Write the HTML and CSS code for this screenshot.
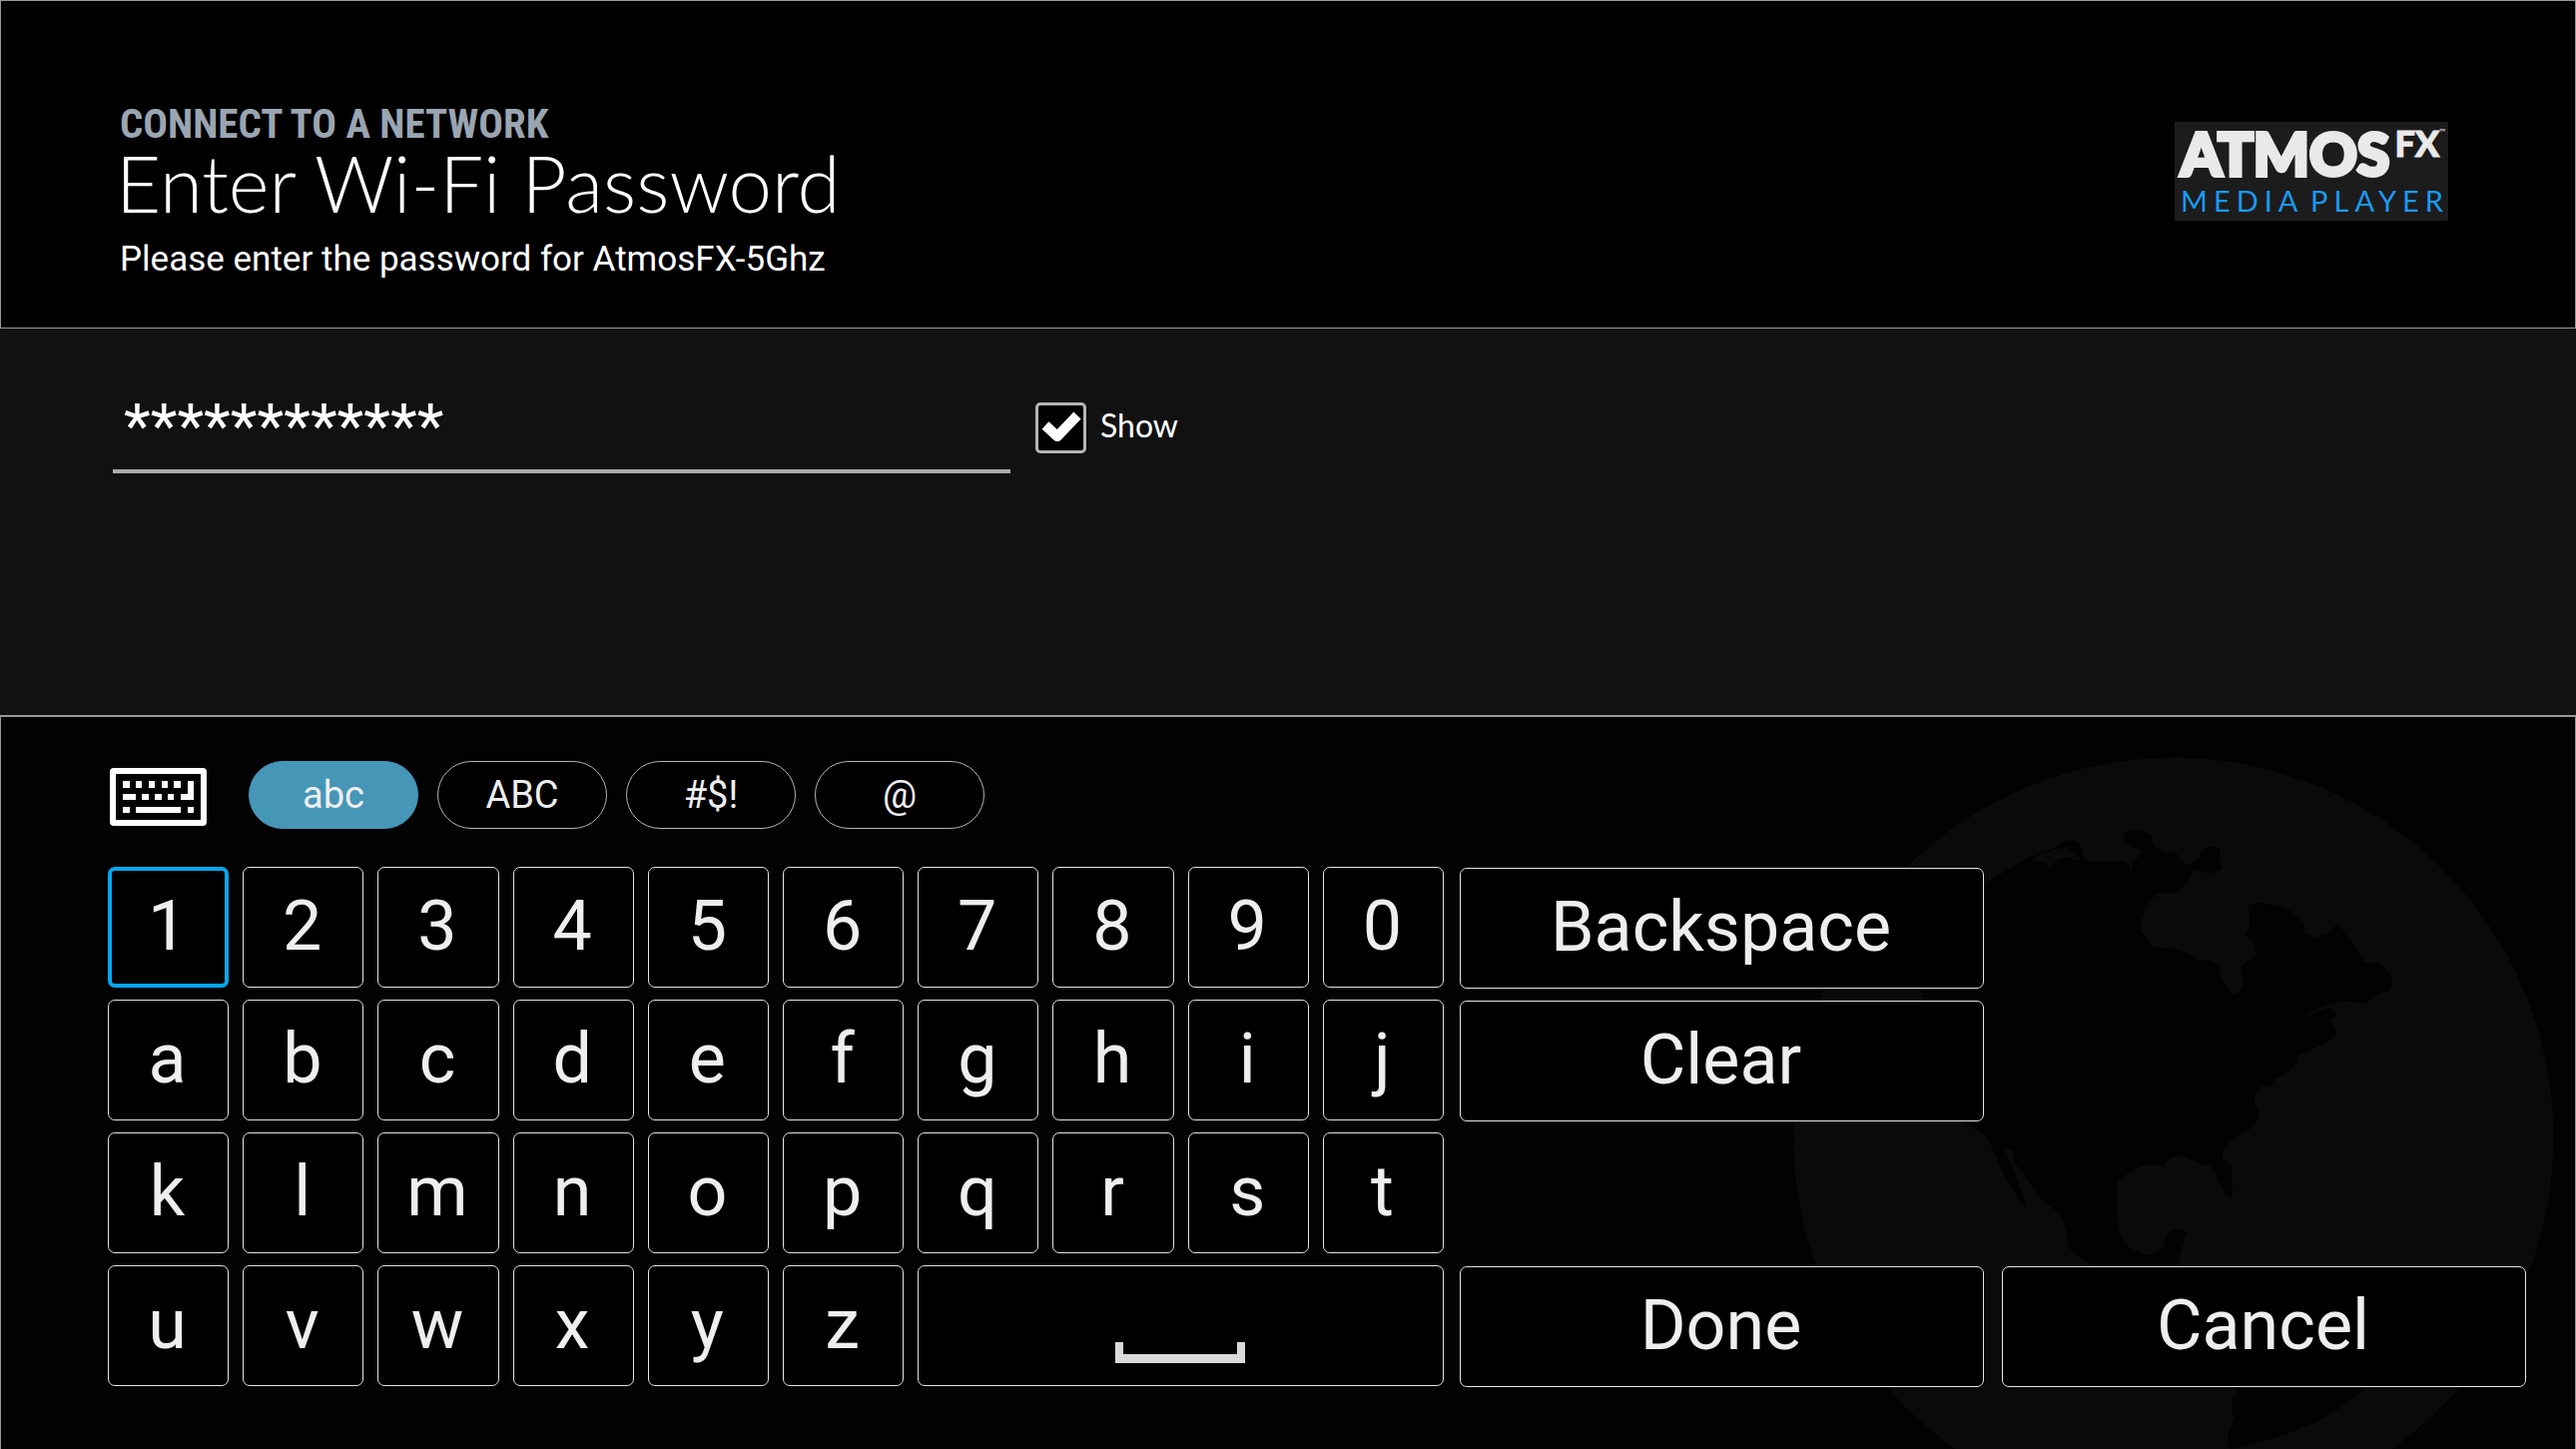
FILE: index.html
```html
<!DOCTYPE html>
<html lang="en">
<head>
<meta charset="utf-8">
<title>Enter Wi-Fi Password</title>
<meta name="viewport" content="width=device-width, initial-scale=1">
<link rel="stylesheet" href="styles.css">
</head>
<body>
<header class="header">
  <div class="headings">
    <p class="eyebrow">CONNECT TO A NETWORK</p>
    <h1 class="title">Enter Wi-Fi Password</h1>
    <p class="hint">Please enter the password for AtmosFX-5Ghz</p>
  </div>
  <div class="logo">
    <div class="logo-name"><span>ATMOS</span><span class="logo-fx">FX</span><span class="logo-tm">™</span></div>
    <div class="logo-sub"><span>MEDIA</span><span>PLAYER</span></div>
  </div>
</header>
<main class="main">
  <section class="entry">
    <input class="password" type="text" aria-label="Password" value="************">
    <label class="show"><input class="show-box" type="checkbox" checked><svg class="show-tick" viewBox="0 0 51 51" aria-hidden="true"><path d="M10 24L22 35L42 14" fill="none" stroke="#fff" stroke-width="10" stroke-linejoin="round"/></svg><span>Show</span></label>
  </section>
  <section class="keyboard">
    <svg class="globe" viewBox="0 0 1568 1554" preserveAspectRatio="none" aria-hidden="true">
      <ellipse cx="778" cy="894" rx="746" ry="806" fill="#0a0a0a"/>
      <path fill="#020202" d="M405 358Q450 325 495 300Q540 285 565 265Q595 258 600 290L605 309L680 307Q690 310 695 335L698 309Q715 295 712 285Q680 270 680 252Q700 230 735 255L740 275L766 290L780 286L792 305L803 318L830 300Q835 270 867 280L873 325Q850 340 818 325Q800 375 770 377L745 376Q710 420 714 460Q735 475 735 490Q800 490 830 518Q850 515 865 530Q880 590 900 590Q925 575 910 545Q905 530 935 510Q950 490 920 465Q935 430 923 403Q950 385 1010 415Q1040 435 1035 458L1053 470L1080 463L1100 440L1130 480L1152 522L1183 523L1195 540Q1215 555 1200 585Q1170 590 1155 610Q1070 590 1025 655Q1050 625 1085 620L1100 632L1085 645L1100 672Q1080 695 1020 720Q1025 750 975 770Q975 790 950 785Q930 810 938 825L945 835Q950 870 900 893Q870 910 875 940L892 952L894 1015Q880 1035 855 950L838 953L790 930L765 940L760 955Q720 945 695 965L668 985V1070Q670 1130 725 1142Q760 1140 760 1110Q770 1075 805 1095L790 1140L788 1175H640Q590 1150 570 1125Q570 1050 525 1035L465 945L462 920L445 915Q470 980 490 1040L484 1038L450 985Q420 910 410 890L370 865L330 700L280 580L320 570Z"/>
      <path fill="#0a0a0a" d="M495 306Q540 310 538 330Q540 300 570 300L598 307L570 278Q540 280 495 306Z"/>
      <path fill="#020202" d="M910 1425Q880 1460 898 1490Q880 1520 888 1554Q1060 1520 1155 1425Z"/>
    </svg>
    <div class="modes">
      <svg class="kb-icon" viewBox="0 0 97 58" fill="#fff" aria-hidden="true"><path fill-rule="evenodd" d="M4 0H93Q97 0 97 4V54Q97 58 93 58H4Q0 58 0 54V4Q0 0 4 0ZM6 6V52H91V6Z"/><path d="M13 13h7v7h-7zM26 13h6v7h-6zM39 13h6v7h-6zM52 13h6v7h-6zM64 13h7v7h-7zM78 13h6v19H71v-6h7zM13 26h13v6H13zM32 26h7v6h-7zM45 26h7v6h-7zM58 26h6v6h-6zM13 39h7v6h-7zM26 39h45v6H26zM78 39h6v6h-6z"/></svg>
      <button class="mode mode-on" type="button">abc</button>
      <button class="mode" type="button">ABC</button>
      <button class="mode" type="button">#$!</button>
      <button class="mode" type="button">@</button>
    </div>
    <div class="board">
      <div class="keys">
        <button class="key key-focus" type="button">1</button><button class="key" type="button">2</button><button class="key" type="button">3</button><button class="key" type="button">4</button><button class="key" type="button">5</button><button class="key" type="button">6</button><button class="key" type="button">7</button><button class="key" type="button">8</button><button class="key" type="button">9</button><button class="key" type="button">0</button>
        <button class="key" type="button">a</button><button class="key" type="button">b</button><button class="key" type="button">c</button><button class="key" type="button">d</button><button class="key" type="button">e</button><button class="key" type="button">f</button><button class="key" type="button">g</button><button class="key" type="button">h</button><button class="key" type="button">i</button><button class="key" type="button">j</button>
        <button class="key" type="button">k</button><button class="key" type="button">l</button><button class="key" type="button">m</button><button class="key" type="button">n</button><button class="key" type="button">o</button><button class="key" type="button">p</button><button class="key" type="button">q</button><button class="key" type="button">r</button><button class="key" type="button">s</button><button class="key" type="button">t</button>
        <button class="key" type="button">u</button><button class="key" type="button">v</button><button class="key" type="button">w</button><button class="key" type="button">x</button><button class="key" type="button">y</button><button class="key" type="button">z</button>
        <button class="key key-space" type="button" aria-label="Space"><svg class="space-icon" viewBox="0 0 130 21" aria-hidden="true"><path fill="#d9d9d9" d="M0 0H8V12H122V0H130V21H0Z"/></svg></button>
      </div>
      <div class="actions">
        <button class="key" type="button">Backspace</button>
        <button class="key key-clear" type="button">Clear</button>
        <button class="key key-done" type="button">Done</button>
        <button class="key key-cancel" type="button">Cancel</button>
      </div>
    </div>
  </section>
</main>
</body>
</html>
```
FILE: styles.css
```css
* { box-sizing: border-box; }

body {
  margin: 0;
  min-height: 100vh;
  display: flex;
  flex-direction: column;
  background: #111;
  color: #fff;
  font-family: Roboto, "Liberation Sans", sans-serif;
}

button, input { font: inherit; color: inherit; }

.header {
  display: flex;
  justify-content: space-between;
  align-items: flex-start;
  padding: 100px 127px 44px 115px;
  border: 1px solid #999;
  background: #000;
}

.headings { display: flex; flex-direction: column; }

.eyebrow {
  margin: 0;
  padding-left: 4px;
  font-family: "Roboto Condensed", Roboto, sans-serif;
  font-size: 41px;
  line-height: 46px;
  font-weight: 700;
  color: #9aa5b1;
}

.title {
  margin: 0;
  font-family: Lato, sans-serif;
  font-size: 78px;
  line-height: 72px;
  font-weight: 300;
}

.hint {
  margin: 0;
  padding: 17px 0 0 4px;
  font-size: 35px;
  line-height: 48px;
}

.logo {
  display: flex;
  flex-direction: column;
  width: 274px;
  margin-top: 21px;
  padding: 2px 5px 3px 6px;
  background: #1c1c1c;
  font-family: Lato, sans-serif;
}

.logo-name {
  display: flex;
  align-items: flex-start;
  font-size: 59px;
  line-height: 60px;
  font-weight: 900;
  color: #e9e9e9;
  -webkit-text-stroke: 4px #e9e9e9;
}

.logo-fx { font-size: 36px; line-height: 38px; padding-left: 5px; -webkit-text-stroke-width: 1px; }
.logo-tm { font-size: 8px; line-height: 16px; font-weight: 400; -webkit-text-stroke-width: 0; }

.logo-sub {
  display: flex;
  justify-content: space-between;
  margin-right: -6px;
  font-size: 29px;
  line-height: 34px;
  letter-spacing: 6px;
  color: #1b9af0;
}

.main { flex: 1; display: flex; flex-direction: column; }

.entry {
  display: flex;
  align-items: flex-start;
  gap: 25px;
  padding: 73px 113px 242px;
}

.password {
  flex: 0 1 899px;
  min-width: 0;
  height: 72px;
  padding: 0 11px 20px;
  border: 0;
  border-bottom: 4px solid #aaa;
  border-radius: 0;
  background: none;
  outline: none;
  font-size: 62px;
}

.show {
  position: relative;
  display: flex;
  align-items: center;
  gap: 14px;
  font-family: Lato, sans-serif;
  font-size: 32px;
  line-height: 48px;
}

.show span { padding-bottom: 4px; }

.show-box {
  appearance: none;
  width: 51px;
  height: 51px;
  margin: 0;
  border: 3px solid #b5b5b5;
  border-radius: 5px;
  background: #000;
}

.show-tick { position: absolute; left: 0; top: 0; width: 51px; height: 51px; }
.show-box:not(:checked) + .show-tick { display: none; }

.keyboard {
  position: relative;
  flex: 1;
  padding: 44px 49px 60px 107px;
  border: 1px solid #999;
  border-top-width: 2px;
  border-bottom: 0;
  background: #020202;
}

/* Decorative globe behind the keys */
.globe { position: absolute; right: -1px; bottom: 0; width: 800px; height: 734px; }

.modes { position: relative; display: flex; align-items: center; gap: 19px; padding-left: 2px; }
.kb-icon { width: 97px; height: 58px; margin: 3px 23px 0 0; }

.mode {
  width: 170px;
  height: 68px;
  padding: 0;
  border: 1px solid #b4b4b4;
  border-radius: 34px;
  background: #000;
  color: #eee;
  font-size: 38px;
}

.mode-on { border-color: #4696b7; background: #4696b7; }

.board {
  position: relative;
  display: grid;
  grid-template-columns: 1338fr 1068fr;
  gap: 16px;
  padding-top: 38px;
}

.keys { display: grid; grid-template-columns: repeat(10, 1fr); grid-auto-rows: 121px; gap: 12px 14px; }

.actions {
  display: grid;
  grid-template-columns: 1fr 1fr;
  grid-template-rows: repeat(4, 121px);
  gap: 12px 18px;
  padding-top: 1px;
}

.key {
  min-width: 0;
  padding: 0 2px 4px 0;
  border: 1px solid #e4e4e4;
  border-radius: 7px;
  background: #000;
  color: #eee;
  font-size: 70px;
}

.key-focus { border: 4px solid #06a6ee; }
.key-space { grid-column: span 4; padding-top: 58px; }
.space-icon { display: block; width: 130px; height: 21px; margin: 0 auto; }
.key-clear { grid-row: 2; }
.key-done { grid-row: 4; }
.key-cancel { grid-row: 4; }
```
